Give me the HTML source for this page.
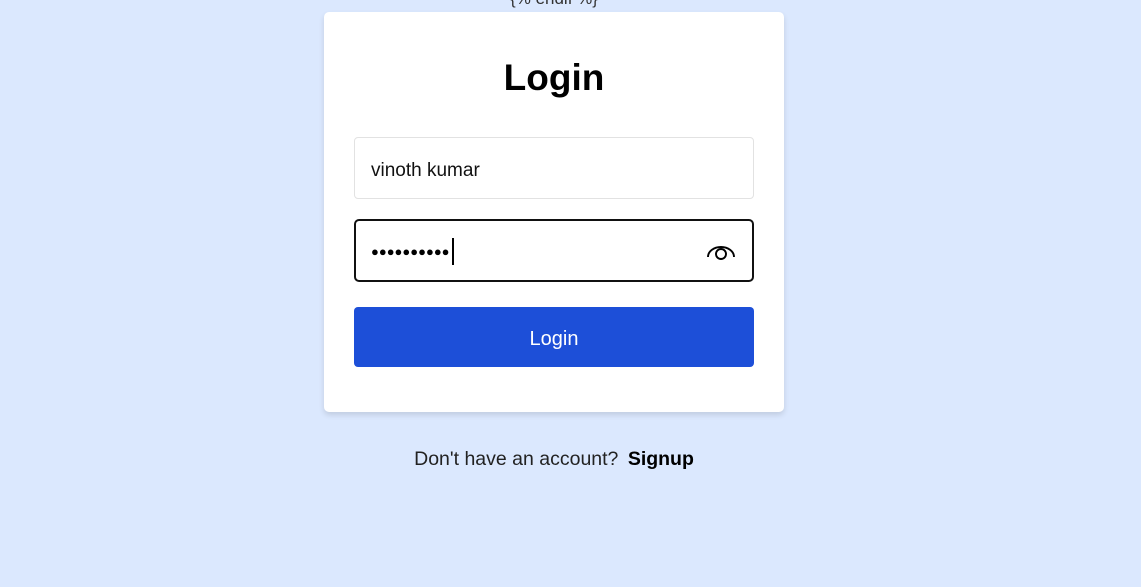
<!DOCTYPE html>
<html><head><meta charset="utf-8"><style>
*{box-sizing:border-box;margin:0;padding:0}
body{width:1141px;height:587px;background:#dbe8fe;font-family:"Liberation Sans",sans-serif;position:relative;overflow:hidden}
.tpl{position:absolute;top:-11px;left:0;width:1108px;text-align:center;font-size:17px;color:#333}
.card{position:absolute;left:324px;top:12px;width:460px;height:400px;background:#fff;border-radius:5px;box-shadow:0 3px 6px rgba(0,0,0,.12)}
h1{position:absolute;top:45px;width:100%;text-align:center;font-size:37px;font-weight:bold;color:#000}
.in1{position:absolute;left:30px;top:125px;width:400px;height:62px;border:1px solid #e2e2e2;border-radius:4px;font-size:19px;padding:0 16px;line-height:66px;color:#111}
.in2{position:absolute;left:30px;top:207px;width:400px;height:63px;border:2px solid #111;border-radius:5px}
.dots{position:absolute;left:15px;top:23px;font-size:13px;color:#000}
.caret{position:absolute;left:96px;top:17px;width:2px;height:27px;background:#000}
.eye{position:absolute;left:350px;top:20px}
.btn{position:absolute;left:30px;top:295px;width:400px;height:60px;background:#1d4fd8;border-radius:4px;color:#fff;font-size:20px;text-align:center;line-height:64px}
.foot{position:absolute;top:448px;left:0;width:1108px;text-align:center;font-size:19.5px;color:#222}
.foot b{color:#000;margin-left:4px}
</style></head><body>
<div class="tpl">{% endif %}</div>
<div class="card">
<h1>Login</h1>
<div class="in1">vinoth kumar</div>
<div class="in2"><span class="dots">●●●●●●●●●●</span><div class="caret"></div>
<svg class="eye" width="30" height="22" viewBox="0 0 30 22"><path d="M2 16 A13 10 0 0 1 28 16" fill="none" stroke="#000" stroke-width="1.9"/><circle cx="15" cy="13" r="5" fill="none" stroke="#000" stroke-width="1.9"/></svg>
</div>
<div class="btn">Login</div>
</div>
<div class="foot">Don't have an account? <b>Signup</b></div>
</body></html>
